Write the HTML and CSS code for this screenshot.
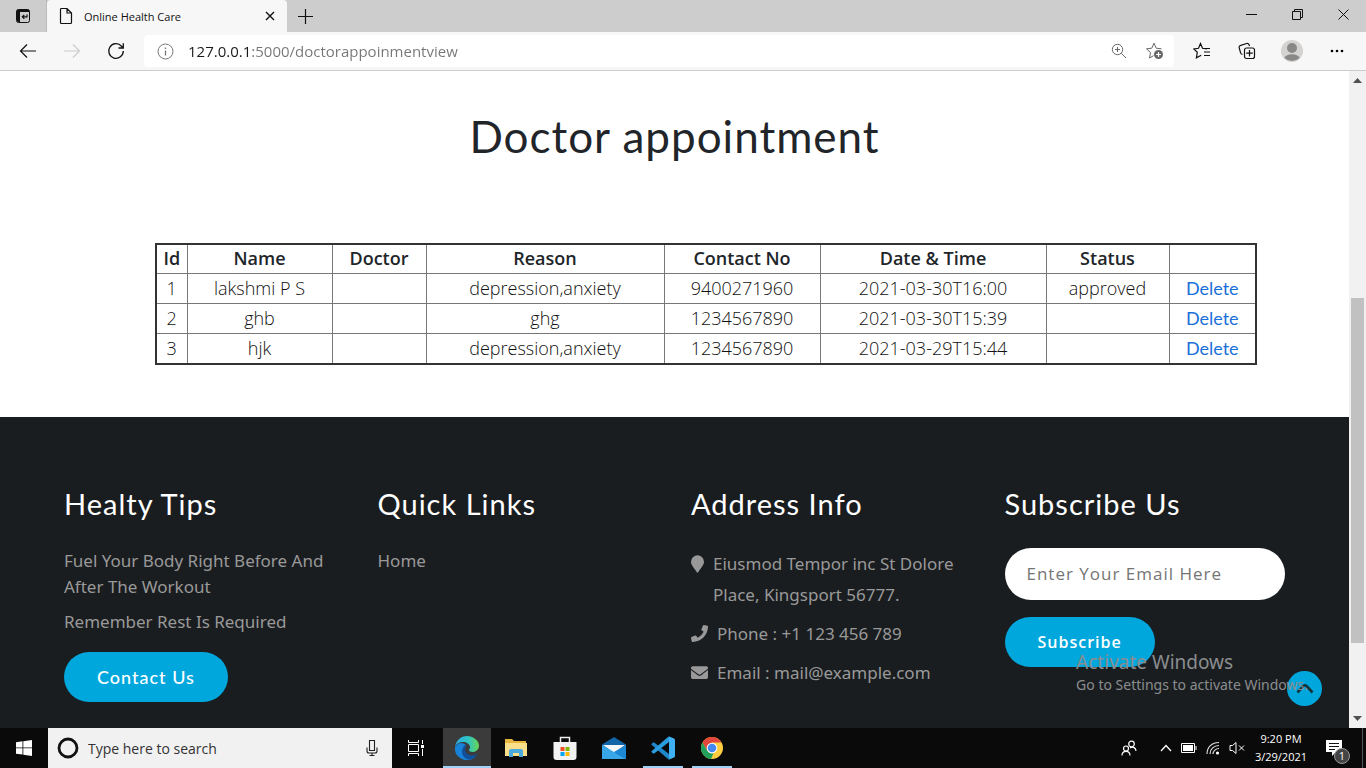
FILE: index.html
```html
<!DOCTYPE html>
<html lang="en">
<head>
<meta charset="utf-8">
<title>Online Health Care</title>
<link rel="stylesheet" href="styles.css">
</head>
<body>
<header class="browser">
  <div class="tabbar">
    <button class="tab-menu" aria-label="Tab actions menu">
      <svg width="16" height="16" viewBox="0 0 16 16"><rect x="1.5" y="1.5" width="13" height="13" rx="2" fill="none" stroke="#111"/><path d="M1.500 4V3.500a2 2 0 0 1 2-2h9a2 2 0 0 1 2 2V4zM2 4h3v10H3l-1-1z" fill="#111"/><path d="M12 6.500v2.300H7.500M9.300 6.800l-2 2 2 2" fill="none" stroke="#111" stroke-width="1.200"/></svg>
    </button>
    <div class="tab">
      <svg width="14" height="18" viewBox="0 0 14 18"><path d="M1.500 2.500a1 1 0 0 1 1-1h5.500l4.500 4.500v9.500a1 1 0 0 1-1 1h-9a1 1 0 0 1-1-1zM8 1.500V6h4.500" fill="none" stroke="#111" stroke-width="1.200"/></svg>
      <span class="tab-title">Online Health Care</span>
      <button class="tab-close" aria-label="Close tab"><svg width="10" height="10" viewBox="0 0 10 10"><path d="M1 1l8 8M9 1L1 9" stroke="#111" stroke-width="1.400"/></svg></button>
    </div>
    <button class="tab-new" aria-label="New tab"><svg width="15" height="15" viewBox="0 0 15 15"><path d="M7.500 0v15M0 7.500h15" stroke="#111" stroke-width="1.200"/></svg></button>
    <div class="window-controls">
      <button aria-label="Minimize"><svg width="11" height="11" viewBox="0 0 11 11"><path d="M0 5.500h11" stroke="#111"/></svg></button>
      <button aria-label="Restore"><svg width="11" height="11" viewBox="0 0 11 11"><path d="M.5 2.500h8v8h-8zM2.500 2.500v-2h8v8h-2" fill="none" stroke="#111"/></svg></button>
      <button aria-label="Close"><svg width="11" height="11" viewBox="0 0 11 11"><path d="M.5.5l10 10M10.500.5l-10 10" stroke="#111"/></svg></button>
    </div>
  </div>
  <div class="toolbar">
    <div class="nav-buttons">
      <button aria-label="Back"><svg width="18" height="16" viewBox="0 0 18 16"><path d="M17 8H1.500M8 1.500L1.500 8 8 14.500" fill="none" stroke="#111" stroke-width="1.200"/></svg></button>
      <button aria-label="Forward" disabled><svg width="18" height="16" viewBox="0 0 18 16"><path d="M1 8h15.500M10 1.500L16.500 8 10 14.500" fill="none" stroke="#ccc" stroke-width="1.200"/></svg></button>
      <button aria-label="Refresh"><svg width="18" height="18" viewBox="0 0 18 18"><path d="M16.300 9A7.300 7.300 0 1 1 14.500 4.200L16 6M16.300 1.200V6H11.500" fill="none" stroke="#111" stroke-width="1.300"/></svg></button>
    </div>
    <div class="address">
      <svg width="17" height="17" viewBox="0 0 17 17"><circle cx="8.500" cy="8.500" r="7.500" fill="none" stroke="#777"/><path d="M8.500 7.500v5M8.500 4.500v1.500" stroke="#777" stroke-width="1.300"/></svg>
      <input class="address-input" type="text" aria-label="Address" value="127.0.0.1:5000/doctorappoinmentview">
      <button aria-label="Zoom"><svg width="16" height="16" viewBox="0 0 16 16"><circle cx="6.500" cy="6.500" r="5.200" fill="none" stroke="#666"/><path d="M10.300 10.300L15 15M6.500 4v5M4 6.500h5" stroke="#666"/></svg></button>
      <button aria-label="Add to favorites"><svg width="19" height="18" viewBox="0 0 19 18"><path d="M9 1.200l2.200 5 5.300.6M9 1.200l-2.200 5-5.300.6 4 3.800-1 5.400 4-2.300" fill="none" stroke="#666"/><circle cx="13.500" cy="12.500" r="4.500" fill="#666"/><path d="M13.500 10v5M11 12.500h5" stroke="#fff" stroke-width="1.200"/></svg></button>
    </div>
    <div class="tool-buttons">
      <button aria-label="Favorites"><svg width="18" height="18" viewBox="0 0 18 18"><path d="M14 6.800l-4.500-.5L7.500 1.500l-2 4.800-4.700.6 3.500 3.400-.9 5.500 4.800-2.600M9.500 6.500H17M11 10h6M11 13.500h6" fill="none" stroke="#111" stroke-width="1.200"/></svg></button>
      <button aria-label="Collections"><svg width="18" height="18" viewBox="0 0 18 18"><rect x="6.500" y="6" width="10" height="10.500" rx="2" fill="none" stroke="#111" stroke-width="1.200"/><path d="M11.500 8v6.500M8.200 11.200h6.600M4.500 12.500a2.500 2.500 0 0 1-2-2L1.200 5.800a2 2 0 0 1 1.500-2.500l6-1.800a2 2 0 0 1 2.500 1.500l.3 1" fill="none" stroke="#111" stroke-width="1.200"/></svg></button>
      <button aria-label="Profile"><svg width="22" height="22" viewBox="0 0 22 22"><circle cx="11" cy="11" r="11" fill="#d5d3d1"/><circle cx="11" cy="8" r="5" fill="#8a8886"/><path d="M3.500 18a7.800 5 0 0 1 15 0A11 11 0 0 1 3.500 18z" fill="#8a8886"/></svg></button>
      <button aria-label="Settings and more"><svg width="14" height="4" viewBox="0 0 14 4"><circle cx="2" cy="2" r="1.300"/><circle cx="7" cy="2" r="1.300"/><circle cx="12" cy="2" r="1.300"/></svg></button>
    </div>
  </div>
</header>

<div class="viewport">
  <div class="page">
    <main class="appointments">
      <h1>Doctor appointment</h1>
      <table>
        <colgroup><col class="c-id"><col class="c-name"><col class="c-doctor"><col class="c-reason"><col class="c-contact"><col class="c-date"><col class="c-status"><col class="c-action"></colgroup>
        <thead><tr><th>Id</th><th>Name</th><th>Doctor</th><th>Reason</th><th>Contact No</th><th>Date &amp; Time</th><th>Status</th><th></th></tr></thead>
        <tbody>
          <tr><td>1</td><td>lakshmi P S</td><td></td><td>depression,anxiety</td><td>9400271960</td><td>2021-03-30T16:00</td><td>approved</td><td><a href="#">Delete</a></td></tr>
          <tr><td>2</td><td>ghb</td><td></td><td>ghg</td><td>1234567890</td><td>2021-03-30T15:39</td><td></td><td><a href="#">Delete</a></td></tr>
          <tr><td>3</td><td>hjk</td><td></td><td>depression,anxiety</td><td>1234567890</td><td>2021-03-29T15:44</td><td></td><td><a href="#">Delete</a></td></tr>
        </tbody>
      </table>
    </main>
    <footer class="site-footer">
      <section>
        <h2>Healty Tips</h2>
        <p>Fuel Your Body Right Before And After The Workout</p>
        <p>Remember Rest Is Required</p>
        <a class="pill" href="#">Contact Us</a>
      </section>
      <section>
        <h2>Quick Links</h2>
        <p><a class="plain" href="#">Home</a></p>
      </section>
      <section>
        <h2>Address Info</h2>
        <ul class="contact">
          <li class="place"><svg width="13" height="18" viewBox="0 0 384 512"><path fill="#999" d="M172 502C27 291 0 270 0 192a192 192 0 0 1 384 0c0 78-27 99-172 310-10 13-30 13-40 0z"/></svg><span>Eiusmod Tempor inc St Dolore Place, Kingsport 56777.</span></li>
          <li><svg width="17" height="17" viewBox="0 0 512 512"><path fill="#999" d="M493 25L389 1c-11-3-23 3-27 14l-48 112c-4 10-2 21 7 28l60 50a371 371 0 0 1-177 177l-50-60c-7-9-18-11-28-7L14 363C3 367-3 379 0 390l24 104c3 11 12 18 24 18 256 0 464-207 464-464 0-11-8-21-19-23z"/></svg><span>Phone : +1 123 456 789</span></li>
          <li><svg width="17" height="17" viewBox="0 0 512 512"><path fill="#999" d="M502 191c4-3 10-1 10 4v205a48 48 0 0 1-48 48H48a48 48 0 0 1-48-48V195c0-5 6-7 10-4 22 17 52 40 155 114 21 15 57 48 91 48 34 0 71-33 91-48 103-74 133-97 155-114zM256 320c23 1 57-29 74-41 133-97 143-105 173-129 6-4 9-11 9-18v-20a48 48 0 0 0-48-48H48a48 48 0 0 0-48 48v20c0 7 3 14 9 18 30 24 41 32 173 129 17 12 51 42 74 41z"/></svg><span>Email : <a class="plain" href="#">mail@example.com</a></span></li>
        </ul>
      </section>
      <section>
        <h2>Subscribe Us</h2>
        <form class="subscribe">
          <input type="email" aria-label="Email" placeholder="Enter Your Email Here">
          <button class="pill" type="button">Subscribe</button>
        </form>
      </section>
    </footer>
    <button class="to-top" aria-label="Back to top"><svg width="18" height="12" viewBox="0 0 18 12"><path d="M1.500 9.500L7.500 3a2 2 0 0 1 3 0l6 6.500" fill="none" stroke="#14323c" stroke-width="2.600"/></svg></button>
    <div class="watermark"><p class="watermark-title">Activate Windows</p><p class="watermark-text">Go to Settings to activate Windows.</p></div>
  </div>
  <div class="scrollbar">
    <svg width="9" height="5" viewBox="0 0 9 5"><path d="M0 5L4.500 0 9 5z" fill="#505050"/></svg>
    <div class="track"><div class="thumb"></div></div>
    <svg width="9" height="5" viewBox="0 0 9 5"><path d="M0 0l4.500 5L9 0z" fill="#505050"/></svg>
  </div>
</div>

<footer class="taskbar">
  <button class="task" aria-label="Start"><svg width="16" height="16" viewBox="0 0 16 16"><path fill="#fff" d="M0 2.200L6.500 1.300v6.200H0zM7.300 1.200L16 0v7.500H7.300zM0 8.300h6.500v6.300L0 13.700zM7.300 8.300H16V16l-8.700-1.200z"/></svg></button>
  <div class="search">
    <svg width="22" height="22" viewBox="0 0 22 22"><circle cx="11" cy="11" r="9" fill="none" stroke="#111" stroke-width="2.800"/></svg>
    <input type="text" aria-label="Search" placeholder="Type here to search">
    <svg width="12" height="18" viewBox="0 0 12 18"><path d="M3.500 1.500h5v10h-5zM1 8.500v3.500q0 2 2 2h6q2 0 2-2V8.500M6 14v2.500M3.500 16.500h5" fill="none" stroke="#222" stroke-width="1.100"/></svg>
  </div>
  <div class="apps">
  <button class="task" aria-label="Task view"><svg width="18" height="16" viewBox="0 0 18 16"><path d="M1.500 4.500h10v7h-10zM1.500 0v2.500h10V0M1.500 16v-2.500h10V16M15.500 0v4M15.500 9v7" fill="none" stroke="#fff"/><path d="M14 5h3v3h-3z" fill="#fff"/></svg></button>
  <button class="task active" aria-label="Microsoft Edge"><svg width="24" height="24" viewBox="0 0 24 24"><defs><linearGradient id="eg" x1="0" x2="1" y1="0" y2="0"><stop offset="0" stop-color="#2cabe6"/><stop offset=".55" stop-color="#2fc5c4"/><stop offset="1" stop-color="#69d553"/></linearGradient></defs><path fill="#1683d8" d="M0 11a12 12 0 0 0 20.500 9.500c-6 3-12-1-12-6Q8.500 11 11 9 5 4 0 11z"/><path fill="url(#eg)" d="M0 11C1 4.500 6 0 12 0s12 4.500 12 9.500c0 4-3 6.500-6.500 6.500-2 0-3.500-1-3.500-2 0-.7 1-1.200 1-2.800C15 8 11.500 6 8 6 4 6 1 8 0 11z"/><path fill="#124f9a" d="M9.500 9.500c-3 3-3.500 8.500 0 12 1.500 1.500 4 2.500 6 2 3-.8 5-2.500 6.300-4.500.2-.5-.3-.8-.8-.6-5.500 2.200-11-.4-11-5 0-1.500.5-2.900 1.500-4z"/></svg></button>
  <button class="task" aria-label="File Explorer"><svg width="22" height="20" viewBox="0 0 22 20"><path fill="#e8b63c" d="M0 1h7l2 2h12v15H0z"/><path fill="#fbe08c" d="M0 5h22v13H0z"/><path fill="#4ba9dc" d="M4 19v-6q0-2 2-2h10q2 0 2 2v6h-4v-4H8v4z"/></svg></button>
  <button class="task" aria-label="Microsoft Store"><svg width="24" height="24" viewBox="0 0 24 24"><path d="M7.500 7V1.500h9V7" fill="none" stroke="#eee" stroke-width="1.500"/><path fill="#f2f2f2" d="M.5 6h23v15q0 3-3 3h-17q-3 0-3-3z"/><path fill="#f25022" d="M7.500 11h4v4h-4z"/><path fill="#7fba00" d="M12.500 11h4v4h-4z"/><path fill="#00a4ef" d="M7.500 16h4v4h-4z"/><path fill="#ffb900" d="M12.500 16h4v4h-4z"/></svg></button>
  <button class="task" aria-label="Mail"><svg width="24" height="22" viewBox="0 0 24 22"><path fill="#1264a8" d="M0 7.500L12 0l12 7.500V22H0z"/><path fill="#f4f7fa" d="M1 8h22L12 16z"/><path fill="#38a7e8" d="M0 8l24 14H0z"/><path fill="#1d87d3" d="M24 8L12 15l12 7z"/></svg></button>
  <button class="task running" aria-label="Visual Studio Code"><svg width="24" height="24" viewBox="0 0 24 24"><path fill="#1f86c9" d="M.5 8L2 6.600q.6-.4 1.200 0L18 18v4.500L17 23 .5 8.800z"/><path fill="#2a9de0" d="M.5 16L2 17.400q.6.400 1.200 0L18 6V1.500L17 1 .5 15.200z"/><path fill="#3fb0f2" d="M17 0l6 2.500q1 .5 1 1.500v16q0 1-1 1.500L17 24q1-.5 1-2V2q0-1.500-1-2z"/></svg></button>
  <button class="task running" aria-label="Google Chrome"><svg width="22" height="22" viewBox="0 0 22 22"><circle cx="11" cy="11" r="11" fill="#ffcd40"/><path fill="#e2453a" d="M1.500 5.500A11 11 0 0 1 20.500 5.500H11L6.200 13.800z"/><path fill="#1fa15d" d="M1.500 5.500L6.200 13.800Q8 16.500 11 16.500L12.500 16.200 10 22A11 11 0 0 1 1.500 5.500z"/><circle cx="11" cy="11" r="5.300" fill="#fff"/><circle cx="11" cy="11" r="4.300" fill="#4688f1"/></svg></button>
  </div>
  <div class="tray">
    <button aria-label="People"><svg width="16" height="17" viewBox="0 0 16 17"><g fill="none" stroke="#fff" stroke-width="1.200"><circle cx="10.500" cy="4" r="2.800"/><circle cx="5" cy="8.500" r="2.500"/><path d="M1 15.500c0-5.500 8-5.500 8 0M9 8c3-2 6 0 6 3"/></g></svg></button>
    <button aria-label="Show hidden icons"><svg width="12" height="8" viewBox="0 0 12 8"><path d="M1 7l5-5.500L11 7" fill="none" stroke="#fff" stroke-width="1.300"/></svg></button>
    <button aria-label="Battery"><svg width="16" height="10" viewBox="0 0 16 10"><path d="M.5.5h13v9H.5zM15 3v4" fill="none" stroke="#fff"/><path d="M2 2h10v6H2z" fill="#fff"/></svg></button>
    <button aria-label="Network"><svg width="14" height="14" viewBox="0 0 14 14"><g fill="none" stroke="#ddd" stroke-width="1.200"><path d="M1 13C1 6 6 1.500 13 1.500M4 13c0-5 4-8.500 9-8.500M7 13c0-3 3-5.500 6-5.500"/></g><circle cx="11.500" cy="12" r="1.600" fill="#fff"/></svg></button>
    <button aria-label="Volume muted"><svg width="16" height="14" viewBox="0 0 16 14"><path d="M1 4.500h2.500L7 1.500v11L3.500 9.500H1zM10 4.500l5 5M15 4.500l-5 5" fill="none" stroke="#fff"/></svg></button>
  </div>
  <div class="clock"><span>9:20 PM</span><span>3/29/2021</span></div>
  <button class="notices" aria-label="Notifications"><svg width="16" height="16" viewBox="0 0 16 16"><path d="M0 0h16v12h-6l-4 4v-4H0z" fill="#fff"/><path d="M3 3.500h10M3 6.500h10M3 9.500h6" stroke="#111"/></svg><span class="badge">1</span></button>
</footer>
</body>
</html>
```
FILE: styles.css
```css
* { box-sizing: border-box; }

body {
  margin: 0;
  height: 100vh;
  display: flex;
  flex-direction: column;
  overflow: hidden;
  font-family: "Open Sans", sans-serif;
  background: #fff;
}

button, input { font: inherit; border: 0; background: none; padding: 0; margin: 0; }
button { display: flex; align-items: center; justify-content: center; }
svg { display: block; flex: none; }
h1, h2, p, ul { margin: 0; padding: 0; }
a { text-decoration: none; }

/* Browser frame */
.tabbar { display: flex; height: 32px; background: #cdcdcd; }
.tab-menu { width: 47px; border-right: 1px solid #bbb; }
.tab {
  width: 240px;
  display: flex;
  align-items: center;
  gap: 11px;
  padding: 0 12px;
  background: #f7f7f7;
  border-radius: 4px 4px 0 0;
}
.tab-title { flex: 1; font-size: 11px; color: #111; }
.tab-new { width: 36px; }
.window-controls { display: flex; margin-left: auto; }
.window-controls button { width: 46px; padding-bottom: 4px; }

.toolbar {
  display: flex;
  align-items: center;
  height: 39px;
  background: #f7f7f7;
  border-bottom: 1px solid #ccc;
}
.nav-buttons { display: flex; padding: 0 6px; }
.nav-buttons button { width: 44px; }
.address {
  flex: 1;
  display: flex;
  align-items: center;
  gap: 18px;
  height: 32px;
  padding: 0 10px 0 13px;
  background: #fff;
  border-radius: 4px;
}
.address-input {
  flex: 1;
  min-width: 0;
  height: 30px;
  margin-left: -4px;
  font-size: 15px;
  background: linear-gradient(90deg, #1a1a1a 62px, #767676 62px);
  background-clip: text;
  -webkit-background-clip: text;
  color: transparent;
}
.tool-buttons { display: flex; padding: 0 7px 0 5px; }
.tool-buttons button { width: 45px; }

/* Scrolled web page */
.viewport { flex: 1; min-height: 0; display: flex; }
.page { position: relative; flex: 1; min-width: 0; overflow: hidden; display: flex; flex-direction: column; }
.appointments { padding: 31px 93px 52px 155px; }
h1 {
  margin: 0 -93px 73px -155px;
  text-align: center;
  font: 400 44px/68px Lato, sans-serif;
  letter-spacing: 1px;
  color: #212529;
}
table {
  width: 100%;
  table-layout: fixed;
  border-collapse: collapse;
  border: 2px solid #333;
  font-size: 18px;
  line-height: 27px;
  text-align: center;
  color: #212529;
}
th, td { height: 30px; padding: 1px; border: 1px solid #777; }
th { height: 29px; padding: 0 1px; font-weight: 600; }
td { font-weight: 300; color: #111; }
td a { font-family: Lato, sans-serif; font-weight: 400; color: #1a6fd8; }
.c-id { width: 31px; }
.c-name { width: 145px; }
.c-doctor { width: 94px; }
.c-reason { width: 238px; }
.c-contact { width: 156px; }
.c-date { width: 226px; }
.c-status { width: 123px; }
.c-action { width: 87px; }

.site-footer {
  flex: 1 0 auto;
  display: grid;
  grid-template-columns: repeat(4, minmax(0, 1fr));
  gap: 33px;
  padding: 68px 64px 24px;
  background: #1a1d20;
  color: #999;
  font-family: "Noto Sans", sans-serif;
  font-size: 17px;
  line-height: 26px;
}
.site-footer h2 {
  margin-bottom: 25px;
  font: 400 29px/38px Lato, sans-serif;
  letter-spacing: 1px;
  color: #fff;
}
.site-footer p { margin-bottom: 9px; }
.plain { color: inherit; }
.pill {
  display: inline-block;
  padding: 0 33px;
  border-radius: 25px;
  background: #00a7dc;
  color: #fff;
  font: 600 16px/50px "Open Sans", sans-serif;
  letter-spacing: 1px;
}
a.pill { margin-top: 8px; font-family: Lato, sans-serif; font-size: 18px; font-weight: 500; }
.contact { list-style: none; line-height: 31px; }
.contact li { display: flex; align-items: center; gap: 9px; margin-bottom: 8px; }
.contact .place { align-items: flex-start; }
.place svg { margin-top: 7px; }
.subscribe { display: flex; flex-direction: column; align-items: flex-start; gap: 17px; }
.subscribe input {
  width: 100%;
  height: 52px;
  padding: 0 22px;
  border-radius: 26px;
  background: #fff;
  font-family: "Open Sans", sans-serif;
  letter-spacing: 1px;
}
.subscribe input::placeholder { color: #757575; }

.to-top {
  position: absolute;
  right: 27px;
  bottom: 22px;
  width: 35px;
  height: 35px;
  border-radius: 50%;
  background: #00a7dc;
}
.watermark { position: absolute; right: 41px; bottom: 33px; color: #8a8d8f; font-family: "Noto Sans", sans-serif; }
.watermark-title { font-size: 19px; line-height: 25px; }
.watermark-text { font-size: 14px; line-height: 20px; }

.scrollbar {
  width: 17px;
  display: flex;
  flex-direction: column;
  align-items: center;
  padding: 7px 0;
  background: #f1f1f1;
}
.track { flex: 1; align-self: stretch; padding: 0 2px; }
.thumb { height: 345px; margin-top: 215px; background: #c1c1c1; }

/* Taskbar */
.taskbar { display: flex; height: 40px; background: #0a0a0a; color: #fff; }
.task { width: 48px; border-bottom: 2px solid transparent; border-top: 2px solid transparent; }
.apps { display: flex; gap: 1px; }
.task.active { margin-left: 2px; background: #3b3b3b; border-bottom-color: #9fd0f5; border-top-color: #3b3b3b; }
.task.running { border-bottom-color: #9fd0f5; width: 40px; margin: 0 4px; }
.search {
  width: 344px;
  display: flex;
  align-items: center;
  gap: 9px;
  padding: 0 14px 0 9px;
  background: #f1f1f1;
  color: #333;
}
.search input { flex: 1; min-width: 0; font-size: 14px; }
.search input::placeholder { color: #333; }
.tray { display: flex; align-items: center; margin-left: auto; padding-right: 8px; gap: 9px; }
.tray button:first-child { margin-right: 14px; }
.clock { display: flex; flex-direction: column; align-items: center; justify-content: center; width: 56px; font-size: 11px; line-height: 18px; }
.notices { position: relative; width: 50px; margin-right: 3px; border-right: 1px solid #555; }
.notices { width: 54px; padding-right: 4px; color: #fff; }
.badge {
  position: absolute;
  right: 12px;
  bottom: 4px;
  width: 16px;
  height: 16px;
  border: 1px solid #999;
  border-radius: 50%;
  background: #444;
  font-size: 11px;
  line-height: 14px;
}
```
